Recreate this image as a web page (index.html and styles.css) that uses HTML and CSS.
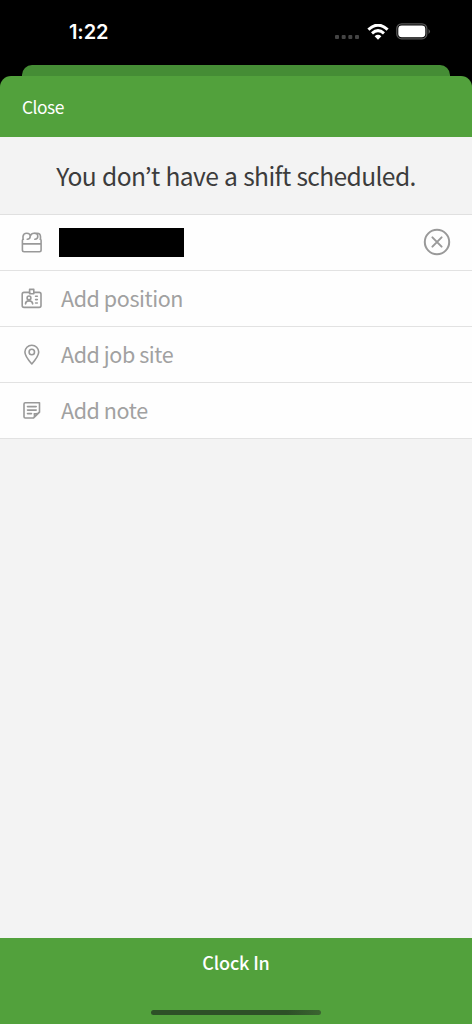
FILE: index.html
```html
<!DOCTYPE html>
<html lang="en">
<head>
<meta charset="utf-8">
<title>Clock In</title>
<link rel="stylesheet" href="styles.css">
</head>
<body>
<div class="screen">
  <header class="status">
    <span class="time">1:22</span>
    <div class="indicators">
      <svg class="dots" width="24" height="4" viewBox="0 0 24 4"><rect width="4" height="4" rx="1"/><rect x="6.7" width="4" height="4" rx="1"/><rect x="13.3" width="4" height="4" rx="1"/><rect x="20" width="4" height="4" rx="1"/></svg>
      <svg class="wifi" width="22" height="16" viewBox="0 0 22 16"><path d="M1.4 5.6Q11-3.3 20.6 5.6M5 9.3q6-5.3 12 0" fill="none" stroke="#fff" stroke-width="3"/><path d="M7.6 12.2q3.4-2.8 6.8 0L11 15.7z" fill="#fff"/></svg>
      <svg class="battery" width="35" height="17" viewBox="0 0 35 17"><rect x=".8" y=".8" width="30" height="15" rx="4.8" fill="none" stroke="#555" stroke-width="1.3"/><rect x="2.3" y="2.4" width="27" height="11.8" rx="3.4" fill="#fff"/><path d="M32.5 6q3 2.4 0 5z" fill="#555"/></svg>
    </div>
  </header>
  <div class="back-sheet"></div>
  <nav class="nav"><span>Close</span></nav>
  <h1 class="title">You don’t have a shift scheduled.</h1>
  <main class="list">
    <div class="row">
      <svg class="icon" viewBox="0 0 22 22"><path d="M2.4 7.2Q1.4 7.2 1.4 8.6V18q0 1.7 1.7 1.7h15.3q1.7 0 1.7-1.7V8.6q0-1.4-1-1.4M1.4 11.9h18.7M2 7.2V4.4Q2.4 1.2 5.7 1.2q3.5 0 3.5 3 0 3-3 3M9.6 3.4q.7-2.2 3.4-2.2 3.8 0 3.8 3 0 3-3 3M13.6 1.2h2.3q3.6 0 3.6 3.5v2.5"/></svg>
      <span class="redacted"></span>
      <svg class="clear" width="28" height="28" viewBox="0 0 28 28"><circle cx="14" cy="14" r="12.2"/><path d="m9.4 9.4 9.2 9.2m0-9.2-9.2 9.2"/></svg>
    </div>
    <div class="row">
      <svg class="icon" viewBox="0 0 22 22"><path d="M8.6 4.4H3q-1.8 0-1.8 1.8v11.4q0 1.8 1.8 1.8h15.2q1.8 0 1.8-1.8V6.2q0-1.8-1.8-1.8h-5.4"/><rect x="8.6" y="1.4" width="4.2" height="4.3"/><circle cx="8" cy="9.9" r="1.9"/><path d="M4.5 15.9q.2-3 3.5-3t3.7 3M14.6 8.2h1.7M14.6 11.6h1.7M14.6 15h1.7"/></svg>
      <span class="label">Add position</span>
    </div>
    <div class="row">
      <svg class="icon" viewBox="0 0 22 22"><path d="M10.8 20Q3.9 12.3 3.9 8.1a6.9 6.9 0 0 1 13.8 0Q17.7 12.3 10.8 20Z"/><circle cx="10.8" cy="8" r="2.7"/></svg>
      <span class="label">Add job site</span>
    </div>
    <div class="row">
      <svg class="icon" viewBox="0 0 22 22"><path d="M4.2 2.8h14.3v9.4l-5.9 5.8H4.2Q3 18 3 16.8V4Q3 2.8 4.2 2.8ZM12.6 18q1.5-1.3.7-4.2 3.5.6 5.2-1.8M6.5 6.6h8.7M6.5 10.1h8.7M6.5 13.6h4"/></svg>
      <span class="label">Add note</span>
    </div>
  </main>
  <footer class="footer"><span>Clock In</span><div class="home"></div></footer>
</div>
</body>
</html>
```
FILE: styles.css
```css
* { box-sizing: border-box; }
body { margin: 0; background: #000; }
.screen {
  width: 472px; height: 1024px; display: flex; flex-direction: column;
  background: #000; overflow: hidden;
  font-family: "Noto Sans CJK KR", "Noto Sans", sans-serif;
}
.status {
  height: 65px; flex: none; display: flex; justify-content: space-between;
  align-items: flex-start; padding: 20px 41px 0 69px;
}
.time { font: 600 20px/24px Inter, sans-serif; letter-spacing: -0.1px; color: #fff; }
.indicators { display: flex; align-items: center; padding-top: 3px; }
.dots { fill: #444; margin: 11px 8px 0 0; }
.wifi { margin-right: 7px; }
.back-sheet { height: 11px; flex: none; margin: 0 22px; background: #458d35; border-radius: 10px 10px 0 0; }
.nav {
  height: 61px; flex: none; padding: 0 22px; background: #52a13c;
  border-radius: 11px 11px 0 0; color: #fff; font-size: 17.4px; line-height: 61px;
  letter-spacing: -0.5px;
}
.title {
  height: 77px; flex: none; margin: 0; background: #f3f3f3; color: #3c3c3c;
  font-size: 24.6px; font-weight: 400; line-height: 77px; text-align: center; white-space: nowrap;
  letter-spacing: -0.62px; word-spacing: 1px;
}
.list { flex: 1; background: #f3f3f3; border-top: 1px solid #e0e0e0; }
.row {
  height: 56px; padding: 0 21px 1px; display: flex; align-items: center;
  background: #fefefe; border-bottom: 1px solid #e2e2e2;
}
.icon { width: 22px; height: 22px; margin: 2px 18px 0 0; flex: none; }
.icon, .clear { fill: none; stroke: #999; stroke-width: 1.6; stroke-linecap: round; stroke-linejoin: round; }
.clear { margin-left: auto; stroke-width: 2; }
.redacted { width: 125px; height: 29px; margin-left: -2px; background: #000; }
.label { color: #a1a1a1; font-size: 21.5px; line-height: 52px; letter-spacing: -0.42px; }
.footer {
  height: 86px; flex: none; background: #52a13c; color: #fff; display: flex;
  flex-direction: column; align-items: center; justify-content: space-between;
  padding: 9px 0 9px; font-size: 18px; font-weight: 500; line-height: 30px; letter-spacing: -0.15px;
}
.home { width: 170px; height: 5px; border-radius: 3px; background: linear-gradient(90deg, #2d5027 80%, #3b6530); }
```
